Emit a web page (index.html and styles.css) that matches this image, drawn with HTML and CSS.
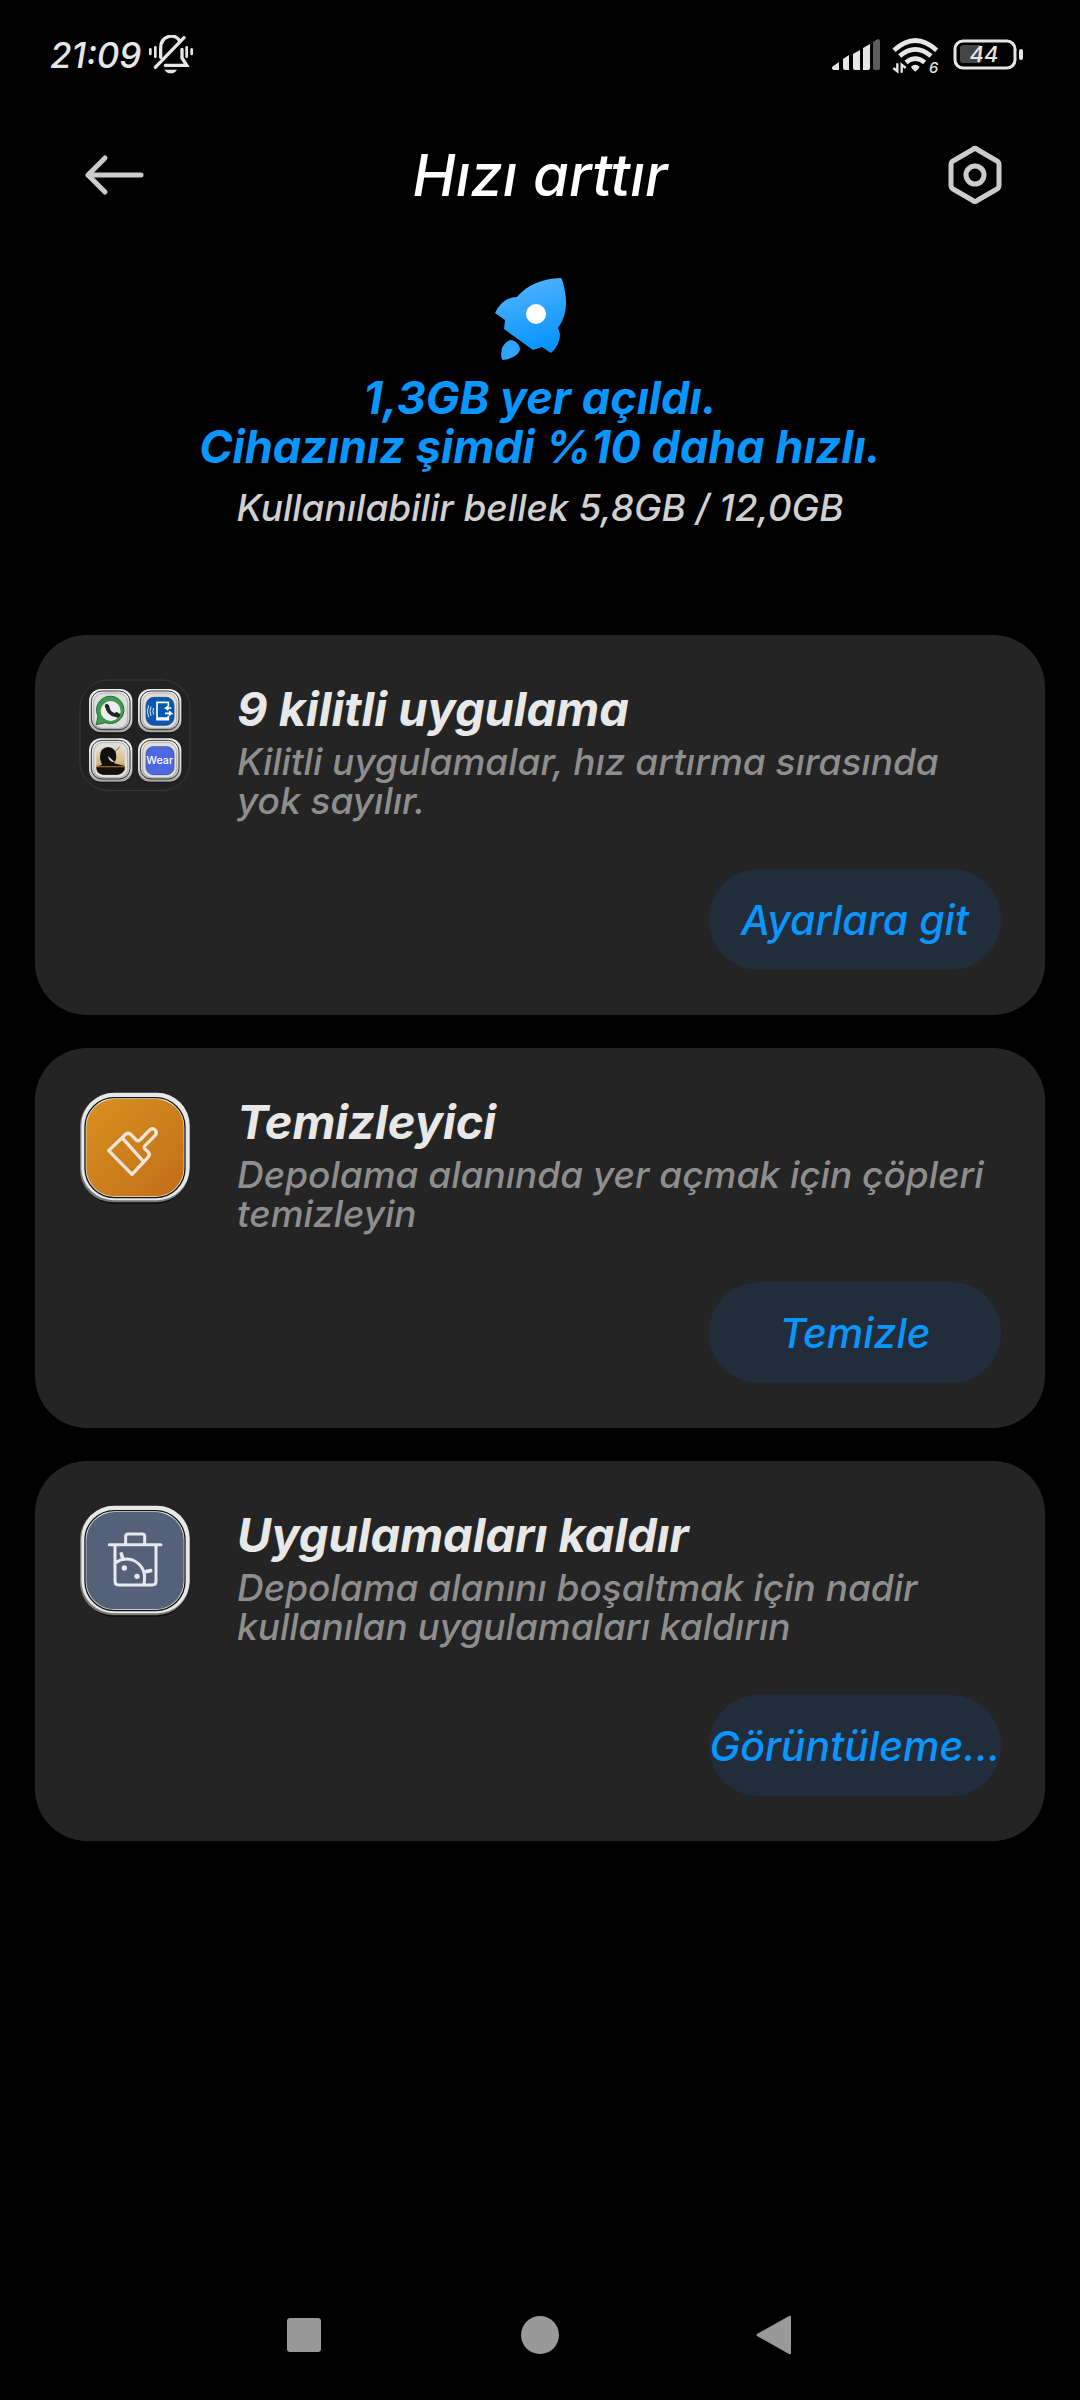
FILE: index.html
```html
<!DOCTYPE html>
<html lang="tr">
<head>
<meta charset="utf-8">
<meta name="viewport" content="width=device-width, initial-scale=1">
<title>Hızı arttır</title>
<link rel="stylesheet" href="styles.css">
</head>
<body>
<div class="screen">
  <div class="status">
    <div class="status-group">
      <span class="time">21:09</span>
      <svg class="bell" width="46" height="40" viewBox="354 45 138 120" fill="none" stroke="#e6e6e6" stroke-width="10" stroke-linecap="round">
        <path d="M392 112V86C392 40 442 42 448 62M376 142L462 53M406 136H470L456 114V88"/>
        <path d="M361 88V102M376 82V110M470 82V110M485 88V102" stroke-width="8"/>
        <path d="M403 149H441Q435 160 422 160Q410 160 403 149Z" fill="#e6e6e6" stroke="none"/>
      </svg>
    </div>
    <div class="status-group">
      <svg width="49" height="32" viewBox="0 0 49 32" fill="#e6e6e6">
        <path d="M0 28L7 23V31H2Q0 31 0 29ZM11 20L17 16V31H13Q11 31 11 29ZM21 15L28 11V31H23Q21 31 21 29ZM31 9L38 5V29Q38 31 36 31H31Z"/>
        <path fill="#5c5c5c" d="M41 3L46 0Q48 0 48 2V29Q48 31 46 31H43Q41 31 41 29Z"/>
      </svg>
      <svg width="50" height="46" viewBox="247 34 150 138" fill="none" stroke="#e6e6e6" stroke-width="14">
        <path d="M253 89Q317 30 381 89M270 106Q317 66 364 106M289 125Q317 103 345 125"/>
        <path fill="#e6e6e6" stroke="none" d="M304 138Q317 126 330 138Q328 144 317 153Q306 144 304 138Z"/>
        <path stroke-width="7" d="M263 128V152L251 142M276 156V132L288 142"/>
        <text x="358" y="156" class="wifi-text">6</text>
      </svg>
      <svg width="70" height="32" viewBox="0 0 70 32">
        <rect x="2" y="2" width="60" height="27" rx="8" fill="none" stroke="#e6e6e6" stroke-width="3"/>
        <rect x="7" y="6" width="22" height="18" rx="3" fill="#454545"/>
        <rect x="66" y="10" width="4" height="11" rx="2" fill="#e6e6e6"/>
        <text x="31" y="23" class="battery-text">44</text>
      </svg>
    </div>
  </div>

  <header class="bar">
    <button class="icon-button" aria-label="Geri">
      <svg width="68" height="60" viewBox="-8 0 68 60" fill="none" stroke="#ccc" stroke-width="5" stroke-linecap="round" stroke-linejoin="round"><path d="M57 30H4M21 13L4 30L21 47"/></svg>
    </button>
    <h1 class="page-title">Hızı arttır</h1>
    <button class="icon-button" aria-label="Ayarlar">
      <svg width="68" height="60" viewBox="-8 0 68 60" fill="none" stroke="#ccc" stroke-width="5" stroke-linejoin="round"><path d="M28 5Q31 2 34 5L53 16Q55 17 55 20V40Q55 43 53 44L34 55Q31 58 28 55L9 44Q7 43 7 40V20Q7 17 9 16Z"/><circle cx="31" cy="30" r="9"/></svg>
    </button>
  </header>

  <main>
    <section class="hero">
      <svg width="100" height="92" viewBox="0 0 100 92">
        <defs><linearGradient id="rocket" x1="0.2" y1="0" x2="0.5" y2="1"><stop offset="0" stop-color="#55b5ff"/><stop offset="1" stop-color="#0594ff"/></linearGradient></defs>
        <path fill="url(#rocket)" d="M71 8Q42 9 27 27Q13 27 5 43L15 50L14 59L43 80L52 77L61 83Q70 75 70 64L68 58Q79 43 75 22Q73 10 71 8Z"/>
        <circle cx="46" cy="44" r="10" fill="#fff"/>
        <path fill="#2fa3fb" d="M13 90Q10 89 12 78Q16 70 22 70Q30 73 30 80Q27 88 13 90Z"/>
      </svg>
      <h2 class="hero-title">1,3GB yer açıldı.<br>Cihazınız şimdi %10 daha hızlı.</h2>
      <p class="hero-sub">Kullanılabilir bellek 5,8GB / 12,0GB</p>
    </section>

    <section class="card">
      <svg class="card-icon" width="112" height="112" viewBox="57 57 336 336">
        <defs>
          <linearGradient id="rim" x1="0" y1="0" x2="0" y2="1"><stop offset="0" stop-color="#f2f2f2"/><stop offset="0.7" stop-color="#d8d8d8"/><stop offset="1" stop-color="#a0a0a0"/></linearGradient>
          <linearGradient id="sky" x1="0" y1="0" x2="0" y2="1"><stop offset="0" stop-color="#e4dccb"/><stop offset="0.6" stop-color="#d5b67a"/><stop offset="1" stop-color="#5d4320"/></linearGradient>
          <g id="tile"><rect x="2" y="4" width="126" height="130" rx="36" fill="#111"/><rect width="130" height="130" rx="36" fill="url(#rim)"/><rect x="7" y="6" width="116" height="116" rx="32" fill="none" stroke="#333" stroke-width="3"/><rect x="14" y="12" width="102" height="106" rx="28" fill="#dedede" stroke="#999" stroke-width="2"/></g>
        </defs>
        <rect x="60" y="60" width="330" height="331" rx="84" fill="#222" stroke="#3a3a3a" stroke-width="3"/>
        <use href="#tile" x="87" y="87"/><use href="#tile" x="234" y="87"/><use href="#tile" x="87" y="235"/><use href="#tile" x="234" y="235"/>
        <path d="M109 194L114 168A41 41 0 1 1 136 188Z" fill="#3e9b50" stroke="#286c35" stroke-width="3"/>
        <circle cx="152" cy="153" r="30" fill="#eee"/>
        <path d="M142 136Q142 162 169 166" fill="none" stroke="#252525" stroke-width="11"/><path d="M134 138Q138 127 145 134L149 146L140 151ZM161 163L169 155L181 162Q183 169 172 174Z" fill="#252525"/>
        <rect x="258" y="112" width="84" height="84" rx="24" fill="#0758b5" stroke="#24364c" stroke-width="2"/>
        <path d="M325 139V127H291V179H325V167M291 174H325M334 144H318L325 138M318 144L325 150M315 160H334L327 154M334 160L327 166" fill="none" stroke="#fff" stroke-width="5"/>
        <path d="M281 144Q276 154 281 164M273 140Q267 154 273 168M266 136Q258 154 266 172" fill="none" stroke="#d9e9ff" stroke-width="3"/>
        <rect x="109" y="260" width="85" height="84" rx="22" fill="url(#sky)"/>
        <path d="M121 300Q115 262 146 261Q173 266 168 298L162 310L194 318V330Q184 344 172 344H128Q109 342 109 322L126 314Z" fill="#12100e"/>
        <path d="M144 288L164 306Q148 308 144 288" fill="#ddd"/><path d="M112 320H194" stroke="#8d6328" stroke-width="4"/>
        <path d="M163 278L179 260" stroke="#333" stroke-width="2"/>
        <rect x="258" y="260" width="84" height="84" rx="22" fill="#4b68e2" stroke="#394365" stroke-width="2"/>
        <text x="299" y="311" class="wear">Wear</text>
      </svg>
      <div class="card-text">
        <h3 class="card-title">9 kilitli uygulama</h3>
        <p class="card-desc">Kilitli uygulamalar, hız artırma sırasında yok sayılır.</p>
      </div>
      <button class="action">Ayarlara git</button>
    </section>

    <section class="card">
      <svg class="card-icon" width="112" height="112" viewBox="57 67 336 336">
        <defs>
          <linearGradient id="orange" x1="0" y1="0" x2="1" y2="1"><stop offset="0" stop-color="#d8911f"/><stop offset="1" stop-color="#c26d18"/></linearGradient>
          <g id="frame"><rect x="64" y="76" width="322" height="326" rx="96" fill="#0c0c0c"/><rect x="60" y="72" width="328" height="326" rx="98" fill="#777"/><rect x="64" y="69" width="325" height="323" rx="98" fill="#e8e8e8"/><rect x="75" y="84" width="300" height="300" rx="88" fill="#e8e8e8" stroke="#151515" stroke-width="4"/></g>
        </defs>
        <use href="#frame"/>
        <rect x="79" y="88" width="292" height="292" rx="85" fill="url(#orange)"/>
        <path d="M146 243L198 193Q206 187 213 195L229 211Q234 216 240 211L268 182Q275 174 284 179Q293 188 285 198L256 227Q250 232 255 238L265 247Q271 254 264 263L216 314ZM188 206L248 273" fill="none" stroke="#efe5d8" stroke-width="10" stroke-linejoin="round"/>
      </svg>
      <div class="card-text">
        <h3 class="card-title">Temizleyici</h3>
        <p class="card-desc">Depolama alanında yer açmak için çöpleri temizleyin</p>
      </div>
      <button class="action">Temizle</button>
    </section>

    <section class="card">
      <svg class="card-icon" width="112" height="112" viewBox="57 67 336 336">
        <use href="#frame"/>
        <rect x="79" y="88" width="292" height="292" rx="85" fill="#556079"/>
        <g fill="none" stroke="#e8e9ec" stroke-width="9" stroke-linecap="round" stroke-linejoin="round">
          <path d="M148 186H303M197 184V161Q197 154 204 154H247Q254 154 254 161V184M165 188V296Q165 307 176 307H277Q288 307 288 296V188M167 240Q190 224 218 232Q262 252 252 305"/>
          <path d="M188 226L184 214M258 267L272 264" stroke-width="11"/>
        </g>
        <circle cx="193" cy="256" r="8" fill="#e8e9ec"/><circle cx="231" cy="281" r="8" fill="#e8e9ec"/>
      </svg>
      <div class="card-text">
        <h3 class="card-title">Uygulamaları kaldır</h3>
        <p class="card-desc">Depolama alanını boşaltmak için nadir kullanılan uygulamaları kaldırın</p>
      </div>
      <button class="action">Görüntüleme...</button>
    </section>
  </main>

  <nav class="nav">
    <button class="nav-button" aria-label="Son uygulamalar"><svg width="40" height="40" viewBox="0 0 40 40"><rect x="3" y="3" width="34" height="34" rx="3" fill="#999"/></svg></button>
    <button class="nav-button" aria-label="Ana ekran"><svg width="40" height="40" viewBox="0 0 40 40"><circle cx="20" cy="20" r="19" fill="#999"/></svg></button>
    <button class="nav-button" aria-label="Geri"><svg width="40" height="40" viewBox="0 0 40 40"><path d="M1 19L33 1Q35 0 35 2V38Q35 40 33 39L1 21Q0 20 1 19Z" fill="#999"/></svg></button>
  </nav>
</div>
</body>
</html>
```
FILE: styles.css
```css
* { box-sizing: border-box; }
body {
  margin: 0;
  background: #000;
  color: #e8e8e8;
  font-family: Inter, Roboto, "Liberation Sans", sans-serif;
  font-style: italic;
}
h1, h2, h3, p { margin: 0; }
svg { display: block; flex: none; }
button { border: 0; padding: 0; background: none; font: inherit; color: inherit; }

.screen { display: flex; flex-direction: column; min-height: 100vh; }

.status { display: flex; justify-content: space-between; align-items: center; height: 110px; padding: 0 57px 0 50px; }
.status-group { display: flex; align-items: center; gap: 11px; }
.status-group:first-child { gap: 7px; }
.time { font-size: 35px; line-height: 40px; font-weight: 500; color: #e6e6e6; }
.wifi-text { font-size: 44px; font-weight: 500; fill: #e6e6e6; stroke: none; }
.battery-text { font-size: 22px; font-weight: 500; fill: #e6e6e6; text-anchor: middle; }
.wear { font-size: 32px; font-style: normal; font-weight: 500; fill: #fff; text-anchor: middle; }

.bar { display: flex; justify-content: space-between; align-items: center; height: 130px; padding: 0 76px; }
.icon-button { width: 68px; height: 60px; }
.page-title { font-size: 58px; line-height: 64px; font-weight: 500; color: #fff; }

.hero { display: flex; flex-direction: column; align-items: center; height: 395px; padding-top: 30px; text-align: center; }
.hero-title { margin-top: 11px; font-size: 45px; line-height: 49px; font-weight: 700; color: #0a96ff; }
.hero-sub { margin-top: 13px; font-size: 37px; line-height: 48px; font-weight: 500; color: #d0d0d0; }

.card {
  display: grid;
  grid-template-columns: 112px 1fr;
  column-gap: 46px;
  margin: 0 35px 33px;
  padding: 44px 44px 45px;
  border-radius: 52px;
  background: #242424;
}
.card-title { font-size: 47px; line-height: 60px; font-weight: 700; }
.card-desc { margin-top: 3px; font-size: 37px; line-height: 39px; font-weight: 500; color: #8e8e8e; }
.action {
  grid-column: 2;
  justify-self: end;
  width: 292px;
  height: 101px;
  margin-top: 49px;
  border-radius: 50px;
  background: #212d3b;
  color: #0a96ff;
  font-size: 41px;
  font-weight: 500;
  white-space: nowrap;
}

.nav { display: flex; justify-content: center; gap: 196px; margin-top: auto; padding-bottom: 45px; }
.nav-button { width: 40px; height: 40px; }
```
